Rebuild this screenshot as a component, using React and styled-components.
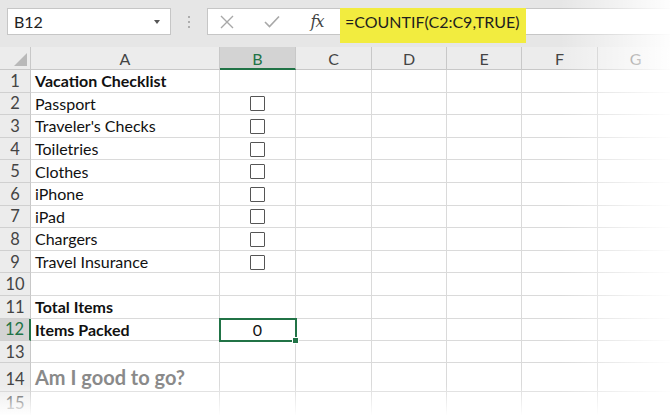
import React from "react";
import styled, { createGlobalStyle } from "styled-components";

const Global = createGlobalStyle`
  html, body { margin: 0; padding: 0; background: #fff; }
  body { width: 670px; height: 415px; overflow: hidden; font-family: "Lato", "Open Sans", sans-serif; }
`;

const Frame = styled.div`
  position: relative;
  width: 670px;
  height: 415px;
  overflow: hidden;
  background: #fff;
`;

const Toolbar = styled.div`
  height: 47px;
  background: #e6e6e6;
  display: flex;
  align-items: flex-start;
  padding-top: 8px;
  box-sizing: border-box;
`;

const NameBox = styled.div`
  margin-left: 7px;
  width: 164px;
  height: 27px;
  box-sizing: border-box;
  background: #fff;
  border: 1px solid #c6c6c6;
  display: flex;
  align-items: center;
  justify-content: space-between;
  padding: 0 10px 0 6px;
  font-size: 16px;
  color: #222;
`;

const Caret = styled.span`
  width: 0;
  height: 0;
  border-left: 3.5px solid transparent;
  border-right: 3.5px solid transparent;
  border-top: 4px solid #555;
`;

const Dots = styled.div`
  width: 36px;
  height: 27px;
  display: flex;
  flex-direction: column;
  align-items: center;
  justify-content: center;
  gap: 3px;
  span { width: 2px; height: 2px; background: #9a9a9a; border-radius: 1px; }
`;

const FormulaBox = styled.div`
  flex: 1;
  height: 27px;
  box-sizing: border-box;
  background: #fff;
  border: 1px solid #c6c6c6;
  border-right: none;
  display: flex;
  align-items: flex-start;
`;

const IconSlot = styled.div`
  width: ${(p) => p.w}px;
  height: 25px;
  display: flex;
  align-items: center;
  justify-content: center;
  color: #a6a6a6;
`;

const Fx = styled.span`
  font-family: "DejaVu Serif", "Liberation Serif", serif;
  font-style: italic;
  font-size: 16px;
  color: #444;
  letter-spacing: -1px;
`;

const Highlight = styled.div`
  margin-left: 4px;
  margin-top: -1px;
  height: 35px;
  width: 186px;
  background: #f2ec3f;
  box-sizing: border-box;
  padding: 4px 0 0 5px;
  font-size: 16px;
  color: #1e1e1e;
  white-space: nowrap;
`;

const Sheet = styled.div`
  display: grid;
  grid-template-columns: 31px 189px 76px 76px 75px 75px 76px 76px;
  grid-template-rows: 23px repeat(12, 22.6px) 22px 29px 24px;
`;

const Corner = styled.div`
  background: #ececec;
  border-right: 1px solid #c8c8c8;
  border-bottom: 1px solid #c8c8c8;
  position: relative;
  box-sizing: border-box;
  &::after {
    content: "";
    position: absolute;
    right: 3px;
    bottom: 3px;
    border-left: 13px solid transparent;
    border-bottom: 13px solid #b9b9b9;
  }
`;

const ColHead = styled.div`
  box-sizing: border-box;
  background: ${(p) => (p.sel ? "#d3d3d3" : "#ececec")};
  border-right: 1px solid #c8c8c8;
  border-bottom: ${(p) => (p.sel ? "2px solid #217346" : "1px solid #c8c8c8")};
  color: ${(p) => (p.sel ? "#217346" : "#444")};
  font-size: 16px;
  display: flex;
  align-items: center;
  justify-content: center;
  padding-top: 1px;
`;

const RowHead = styled.div`
  box-sizing: border-box;
  background: ${(p) => (p.sel ? "#d3d3d3" : "#ececec")};
  border-right: ${(p) => (p.sel ? "2px solid #217346" : "1px solid #c8c8c8")};
  border-bottom: 1px solid #d0d0d0;
  color: ${(p) => (p.sel ? "#217346" : "#444")};
  font-size: 16.5px;
  display: flex;
  align-items: ${(p) => (p.low ? "flex-end" : "center")};
  justify-content: center;
  padding-bottom: ${(p) => (p.low ? 2 : 0)}px;
`;

const Cell = styled.div`
  box-sizing: border-box;
  border-right: 1px solid #dadada;
  border-bottom: 1px solid #dadada;
  display: flex;
  align-items: center;
  justify-content: ${(p) => (p.center ? "center" : "flex-start")};
  padding-left: ${(p) => (p.center ? 0 : 4)}px;
  font-size: ${(p) => (p.big ? 20 : 16)}px;
  font-weight: ${(p) => (p.bold ? 700 : 400)};
  color: ${(p) => (p.muted ? "#8a8a8a" : "#111")};
  white-space: nowrap;
  position: relative;
`;

const Selected = styled(Cell)`
  outline: 2px solid #217346;
  outline-offset: -1px;
  z-index: 1;
  &::after {
    content: "";
    position: absolute;
    right: -4px;
    bottom: -4px;
    width: 5px;
    height: 5px;
    background: #217346;
    border: 1px solid #fff;
  }
`;

const Box = styled.span`
  width: 13px;
  height: 13px;
  border: 1.3px solid #555;
  border-radius: 1px;
  margin-top: 1px;
`;

const FadeRight = styled.div`
  position: absolute;
  top: 0;
  right: 0;
  width: 110px;
  height: 100%;
  background: linear-gradient(to right, rgba(255,255,255,0), rgba(255,255,255,0.95));
  pointer-events: none;
`;

const FadeBottom = styled.div`
  position: absolute;
  left: 0;
  bottom: 0;
  width: 100%;
  height: 30px;
  background: linear-gradient(to bottom, rgba(255,255,255,0), rgba(255,255,255,0.97));
  pointer-events: none;
`;

const cols = ["A", "B", "C", "D", "E", "F", "G"];
const rows = [
  { a: "Vacation Checklist", bold: true },
  { a: "Passport", box: true },
  { a: "Traveler's Checks", box: true },
  { a: "Toiletries", box: true },
  { a: "Clothes", box: true },
  { a: "iPhone", box: true },
  { a: "iPad", box: true },
  { a: "Chargers", box: true },
  { a: "Travel Insurance", box: true },
  { a: "" },
  { a: "Total Items", bold: true },
  { a: "Items Packed", bold: true, sel: true },
  { a: "" },
  { a: "Am I good to go?", bold: true, big: true, muted: true },
  { a: "" },
];

export default function App() {
  return (
    <Frame>
      <Global />
      <Toolbar>
        <NameBox>
          <span>B12</span>
          <Caret />
        </NameBox>
        <Dots>
          <span /><span /><span />
        </Dots>
        <FormulaBox>
          <IconSlot w={38}>
            <svg width="14" height="14" viewBox="0 0 14 14">
              <path d="M1 1 L13 13 M13 1 L1 13" stroke="#a8a8a8" strokeWidth="1.4" fill="none" />
            </svg>
          </IconSlot>
          <IconSlot w={52}>
            <svg width="16" height="13" viewBox="0 0 16 13">
              <path d="M1 7 L5.5 11.5 L15 1.5" stroke="#a8a8a8" strokeWidth="1.6" fill="none" />
            </svg>
          </IconSlot>
          <IconSlot w={38}>
            <Fx>fx</Fx>
          </IconSlot>
          <Highlight>=COUNTIF(C2:C9,TRUE)</Highlight>
        </FormulaBox>
      </Toolbar>
      <Sheet>
        <Corner />
        {cols.map((c) => (
          <ColHead key={c} sel={c === "B"}>{c}</ColHead>
        ))}
        {rows.map((r, i) => (
          <React.Fragment key={i}>
            <RowHead sel={r.sel} low={i === 13 || i === 14}>{i + 1}</RowHead>
            <Cell bold={r.bold} big={r.big} muted={r.muted}>{r.a}</Cell>
            {r.sel ? (
              <Selected center>0</Selected>
            ) : (
              <Cell center>{r.box ? <Box /> : null}</Cell>
            )}
            <Cell /><Cell /><Cell /><Cell /><Cell />
          </React.Fragment>
        ))}
      </Sheet>
      <FadeRight />
      <FadeBottom />
    </Frame>
  );
}
